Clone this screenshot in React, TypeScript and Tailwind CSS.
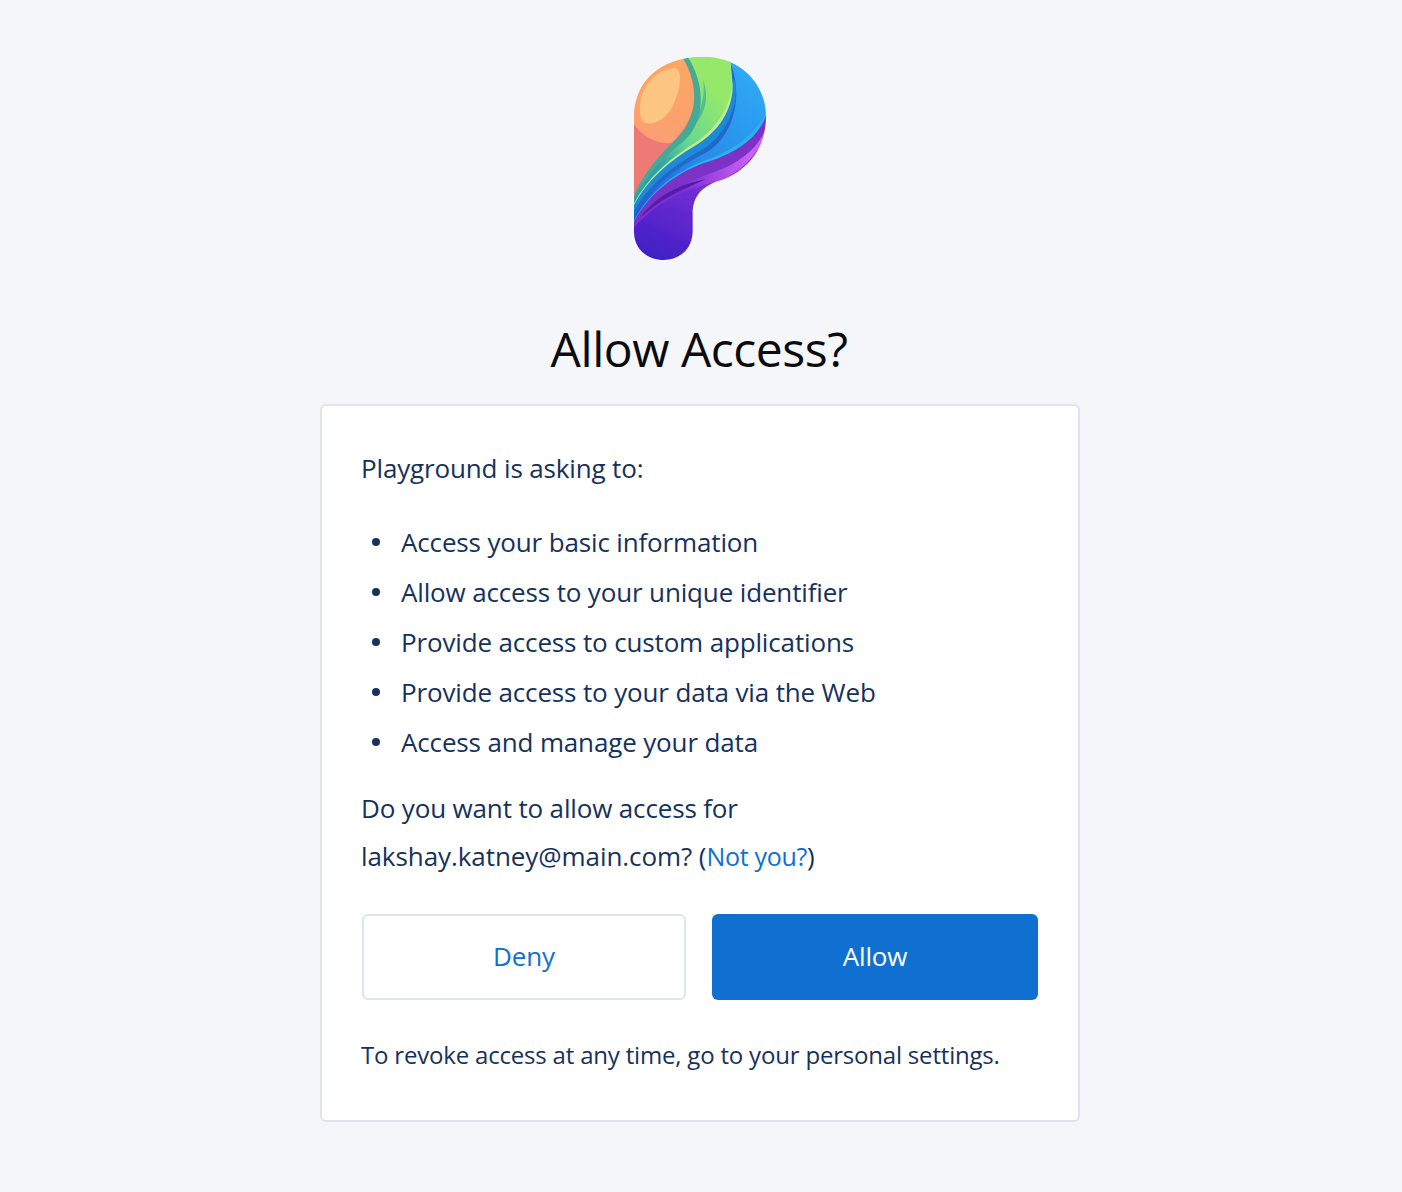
import React from "react";

const permissions = [
	"Access your basic information",
	"Allow access to your unique identifier",
	"Provide access to custom applications",
	"Provide access to your data via the Web",
	"Access and manage your data",
];

function Logo() {
	const outline =
		"M42 560 L42 215 C42 115 115 35 250 35 C360 35 438 115 438 215 C438 320 370 385 295 408 C245 425 218 455 218 505 L218 558 C218 610 180 645 130 645 C80 645 42 610 42 560 Z";
	return (
		<svg width="160" height="225" viewBox="0 0 480 675" className="block">
			<defs>
				<clipPath id="logo-clip">
					<path d={outline} />
				</clipPath>
				<linearGradient id="bottom" x1="0.5" y1="0.55" x2="0.35" y2="1">
					<stop offset="0" stopColor="#7f30d8" />
					<stop offset="1" stopColor="#3f1fc4" />
				</linearGradient>
				<linearGradient id="violet" x1="0" y1="0" x2="1" y2="0">
					<stop offset="0.4" stopColor="#7a2fd6" />
					<stop offset="0.8" stopColor="#cb5ff2" />
				</linearGradient>
				<linearGradient id="blue" x1="0.8" y1="0" x2="0.2" y2="1">
					<stop offset="0" stopColor="#2fb0f8" />
					<stop offset="0.6" stopColor="#2a8be8" />
					<stop offset="1" stopColor="#1a5fd8" />
				</linearGradient>
				<linearGradient id="green" x1="0.7" y1="0" x2="0.1" y2="0.75">
					<stop offset="0.15" stopColor="#95e86a" />
					<stop offset="0.55" stopColor="#68d890" />
					<stop offset="0.85" stopColor="#2fa0a8" />
				</linearGradient>
				<linearGradient id="orange" x1="0.5" y1="0" x2="0.5" y2="1">
					<stop offset="0" stopColor="#fda85f" />
					<stop offset="1" stopColor="#fb9f72" />
				</linearGradient>
				<filter id="soft">
					<feGaussianBlur stdDeviation="2" />
				</filter>
			</defs>
			<g clipPath="url(#logo-clip)" filter="url(#soft)">
				<rect width="480" height="675" fill="url(#bottom)" />
				{/* each layer covers everything up and left of its edge */}
				<path d="M42 548 C110 470 200 430 290 410 C360 385 420 330 445 240 L480 0 L0 0 L0 548 Z" fill="url(#violet)" />
				<path d="M42 540 C100 455 190 412 280 382 C350 358 410 318 438 250 L480 0 L0 0 L0 540 Z" fill="#7b30c6" />
				<path d="M60 520 C110 450 180 418 258 403 C180 436 115 465 60 520 Z" fill="#541aa8" />
				<path d="M42 530 C90 440 170 385 250 355 C330 330 410 290 438 212 L480 0 L0 0 L0 530 Z" fill="#25b4ee" />
				<path d="M42 527 C90 436 170 381 248 349 C320 324 395 285 438 205 L480 0 L0 0 L0 527 Z" fill="url(#blue)" />
				<path d="M42 512 C100 412 190 358 260 322 C330 280 375 170 332 55 L0 0 L0 512 Z" fill="#2468cc" />
				<path d="M42 498 C95 405 180 350 250 312 C310 275 358 190 346 110 L240 0 L0 0 L0 498 Z" fill="#1f8ad8" />
				<path d="M42 480 C90 390 170 335 232 298 C295 258 338 195 338 122 L332 55 L300 0 L0 0 L0 480 Z" fill="#c4ec8c" />
				<path d="M42 476 C90 385 170 328 228 292 C285 252 328 195 336 122 L332 55 L300 0 L0 0 L0 476 Z" fill="url(#green)" />
				<path d="M250 105 C270 170 252 215 208 258 C240 205 256 165 250 105 Z" fill="#53bf8e" />
				<path d="M42 462 C85 378 150 322 195 285 C250 235 262 130 205 38 L190 20 L0 0 L0 462 Z" fill="#42ab96" />
				{/* coral and orange */}
				<path d="M42 450 C80 365 140 310 175 275 C225 225 245 130 190 42 L0 0 L0 450 Z" fill="#ee7a78" />
				<path d="M42 238 C70 280 120 300 155 293 C190 260 225 210 222 150 C220 105 205 70 190 42 L0 0 L0 238 Z" fill="url(#orange)" />
				<path d="M60 180 C65 120 115 70 165 70 C190 75 182 135 160 180 C135 230 90 245 70 230 C60 220 58 200 60 180 Z" fill="#fcc580" />
			</g>
		</svg>
	);
}

export default function App() {
	return (
		<div className="min-h-[1192px] bg-[#f4f6f9] font-['Open_Sans','Liberation_Sans',sans-serif] text-[#16325c]">
			<div className="flex flex-col items-center pr-[2px]">
				<div className="pt-[45px] pb-[46px]">
					<Logo />
				</div>
				<h1 className="text-[48px] leading-[66px] tracking-[-0.47px] text-[#0b0b0b] font-normal mb-[22px] mr-[2px]">
					Allow Access?
				</h1>

				<div className="w-[760px] h-[718px] bg-white border-2 border-[#dfe3ec] rounded-[6px] px-[39px] pt-[42px]">
					<p className="text-[26px] leading-[40px] tracking-[-0.15px]">
						Playground is asking to:
					</p>

					<ul className="mt-[29px]">
						{permissions.map((item) => (
							<li
								key={item}
								className="flex items-center h-[50px] text-[26px] tracking-[-0.15px]"
							>
								<span className="w-[8px] h-[8px] rounded-full bg-[#16325c] ml-[11px] mr-[21px]"></span>
								{item}
							</li>
						))}
					</ul>

					<p className="mt-[17px] text-[26px] leading-[48px] tracking-[-0.15px]">
						Do you want to allow access for
						<br />
						<span className="tracking-[-0.07px]">lakshay.katney@main.com? (</span>
						<a href="#" className="text-[#0f70d1] text-[25px] tracking-[-0.3px]">
							Not you?
						</a>
						)
					</p>

					<div className="flex gap-[26px] mt-[34px] pl-px">
						<button className="w-[324px] h-[86px] pb-[2px] bg-white border-2 border-[#dfe3ec] rounded-[6px] text-[26px] text-[#0f70d1] tracking-[-0.15px]">
							Deny
						</button>
						<button className="w-[326px] h-[86px] pb-[2px] bg-[#0f70d1] rounded-[6px] text-[26px] text-white tracking-[-0.15px]">
							Allow
						</button>
					</div>

					<p className="mt-[35px] text-[24px] leading-[40px] tracking-[-0.19px]">
						To revoke access at any time, go to your personal settings.
					</p>
				</div>
			</div>
		</div>
	);
}
